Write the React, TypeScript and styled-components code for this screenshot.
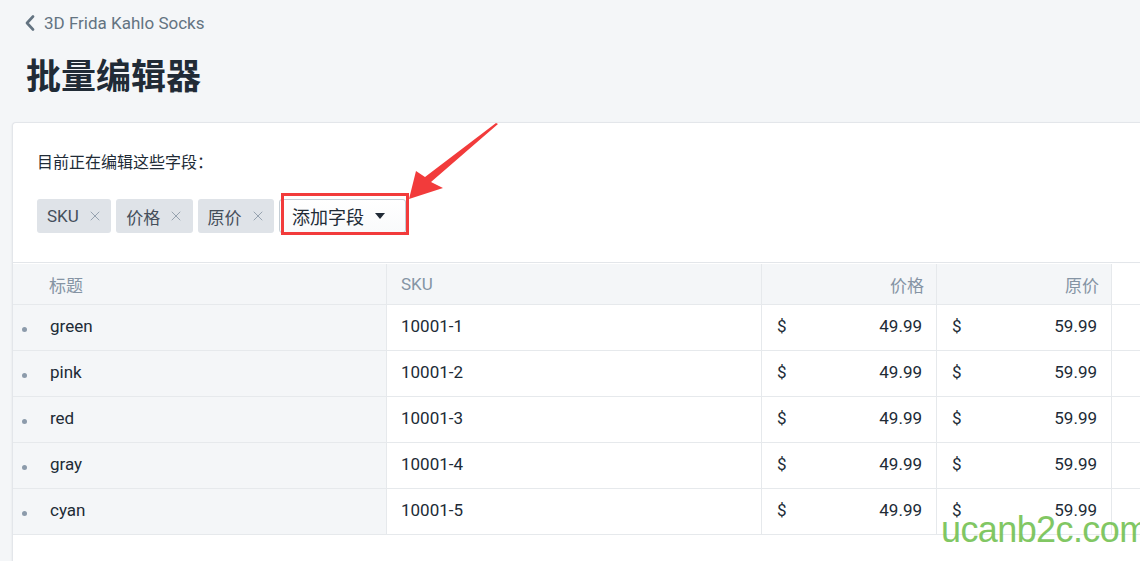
import React from "react";
import styled, { createGlobalStyle } from "styled-components";
import { X } from "lucide-react";

const GlobalStyle = createGlobalStyle`
  html, body { margin: 0; padding: 0; background: #f4f6f8; }
  body {
    font-family: Roboto, "Noto Sans CJK SC", sans-serif;
    color: #212b36;
    overflow: hidden;
  }
  * { box-sizing: border-box; }
`;

const Page = styled.div`
  position: relative;
  width: 1140px;
  height: 561px;
  padding-top: 11px;
  overflow: hidden;
`;

const Header = styled.div`
  padding: 0 26px;
`;

const BackLink = styled.a`
  display: flex;
  align-items: center;
  gap: 9px;
  height: 24px;
  font-size: 17px;
  color: #637381;
  text-decoration: none;
  svg { margin-left: -1px; }
`;

const Title = styled.h1`
  margin: 17px 0 0;
  font-size: 35px;
  line-height: 44px;
  font-weight: 700;
  color: #212b36;
  font-family: "Noto Sans CJK SC", sans-serif;
`;

const Card = styled.section`
  position: relative;
  margin: 26px 0 0 12px;
  background: #fff;
  border: 1px solid #e3e6ea;
  border-right: none;
  border-radius: 4px 0 0 0;
  box-shadow: 0 1px 2px rgba(63, 63, 68, 0.12);
  padding-bottom: 60px;
`;

const FieldsSection = styled.div`
  padding: 26px 24px 29px;
`;

const Label = styled.div`
  font-family: "Noto Sans CJK SC", sans-serif;
  font-size: 16px;
  line-height: 24px;
  color: #212b36;
`;

const TagRow = styled.div`
  display: flex;
  gap: 5px;
  margin-top: 26px;
`;

const Tag = styled.span`
  display: inline-flex;
  align-items: center;
  gap: 8px;
  height: 34px;
  padding: 0 8.4px 0 10px;
  border-radius: 3px;
  background: #dfe3e8;
  font-size: 17px;
  color: #454f5b;
  svg { color: #919eab; }
`;

const AddButton = styled.button`
  display: inline-flex;
  align-items: center;
  gap: 11px;
  height: 34px;
  padding: 0 20px 0 12px;
  border: 1px solid #c4cdd5;
  border-radius: 3px;
  background: linear-gradient(180deg, #fff, #f9fafb);
  font-family: "Noto Sans CJK SC", sans-serif;
  font-size: 18px;
  color: #212b36;
`;

const Caret = styled.span`
  width: 0;
  height: 0;
  border-left: 5px solid transparent;
  border-right: 5px solid transparent;
  border-top: 6px solid #212b36;
`;

const Highlight = styled.div`
  position: absolute;
  left: 268px;
  top: 70px;
  width: 128px;
  height: 42px;
  border: 3px solid #f23b3b;
  pointer-events: none;
`;

const Table = styled.div`
  display: grid;
  grid-template-columns: 374px 375px 175px 175px 1fr;
  border-top: 1px solid #e3e6ea;
  padding-top: 1px;
`;

const HeadCell = styled.div<{ $align?: "left" | "right"; $blank?: boolean }>`
  height: 41px;
  display: flex;
  align-items: center;
  justify-content: ${(p) => (p.$align === "right" ? "flex-end" : "flex-start")};
  padding: ${(p) => (p.$align === "right" ? "0 12px 0 0" : "0 0 0 14px")};
  background: ${(p) => (p.$blank ? "#fff" : "#f4f6f8")};
  border-right: ${(p) => (p.$blank ? "none" : "1px solid #e6e9ec")};
  border-bottom: 1px solid #e6e9ec;
  font-family: Roboto, "Noto Sans CJK SC", sans-serif;
  font-size: 17px;
  color: #8594a4;
`;

const TitleHead = styled(HeadCell)`
  padding-left: 36px;
`;

const Cell = styled.div<{ $blank?: boolean }>`
  height: 46px;
  display: flex;
  align-items: center;
  padding: 0 14px 4px;
  background: #fff;
  border-right: ${(p) => (p.$blank ? "none" : "1px solid #e6e9ec")};
  border-bottom: 1px solid #e6e9ec;
  font-size: 17px;
  color: #212b36;
`;

const TitleCell = styled(Cell)`
  background: #f4f6f8;
  padding-left: 9px;
  gap: 23px;
`;

const Bullet = styled.span`
  width: 5px;
  height: 5px;
  border-radius: 50%;
  background: #8c9bab;
  margin-top: 7px;
`;

const MoneyCell = styled(Cell)`
  justify-content: space-between;
  padding: 0 14px 4px 15px;
`;

const Arrow = styled.svg`
  position: absolute;
  left: 0;
  top: 0;
  pointer-events: none;
`;

const Watermark = styled.div`
  position: absolute;
  left: 941px;
  top: 506px;
  font-family: "Liberation Sans", Arial, sans-serif;
  font-size: 36px;
  line-height: 48px;
  letter-spacing: -0.6px;
  color: #74c153;
  opacity: 0.9;
  pointer-events: none;
`;

const rows = [
  { title: "green", sku: "10001-1" },
  { title: "pink", sku: "10001-2" },
  { title: "red", sku: "10001-3" },
  { title: "gray", sku: "10001-4" },
  { title: "cyan", sku: "10001-5" },
];

export default function App() {
  return (
    <>
      <GlobalStyle />
      <Page>
        <Header>
          <BackLink href="#">
            <svg width="10" height="16" viewBox="0 0 10 16">
              <polyline
                points="8,1.5 2,8 8,14.5"
                fill="none"
                stroke="#637381"
                strokeWidth="2.6"
                strokeLinecap="round"
                strokeLinejoin="round"
              />
            </svg>
            3D Frida Kahlo Socks
          </BackLink>
          <Title>批量编辑器</Title>
        </Header>
        <Card>
          <FieldsSection>
            <Label>目前正在编辑这些字段：</Label>
            <TagRow>
              {["SKU", "价格", "原价"].map((t) => (
                <Tag key={t}>
                  {t}
                  <X size={16} strokeWidth={1.4} />
                </Tag>
              ))}
              <AddButton>
                添加字段
                <Caret />
              </AddButton>
            </TagRow>
          </FieldsSection>
          <Highlight />
          <Table>
            <TitleHead>标题</TitleHead>
            <HeadCell>SKU</HeadCell>
            <HeadCell $align="right">价格</HeadCell>
            <HeadCell $align="right">原价</HeadCell>
            <HeadCell $blank />
            {rows.map((r) => (
              <React.Fragment key={r.sku}>
                <TitleCell>
                  <Bullet />
                  {r.title}
                </TitleCell>
                <Cell>{r.sku}</Cell>
                <MoneyCell>
                  <span>$</span>
                  <span>49.99</span>
                </MoneyCell>
                <MoneyCell>
                  <span>$</span>
                  <span>59.99</span>
                </MoneyCell>
                <Cell $blank />
              </React.Fragment>
            ))}
          </Table>
        </Card>
        <Arrow width="1140" height="561" viewBox="0 0 1140 561">
          <polygon
            points="498,124 431,182 443,188 409,199 416,171 425,177 496,123"
            fill="#f23b3b"
          />
        </Arrow>
        <Watermark>ucanb2c.com</Watermark>
      </Page>
    </>
  );
}
